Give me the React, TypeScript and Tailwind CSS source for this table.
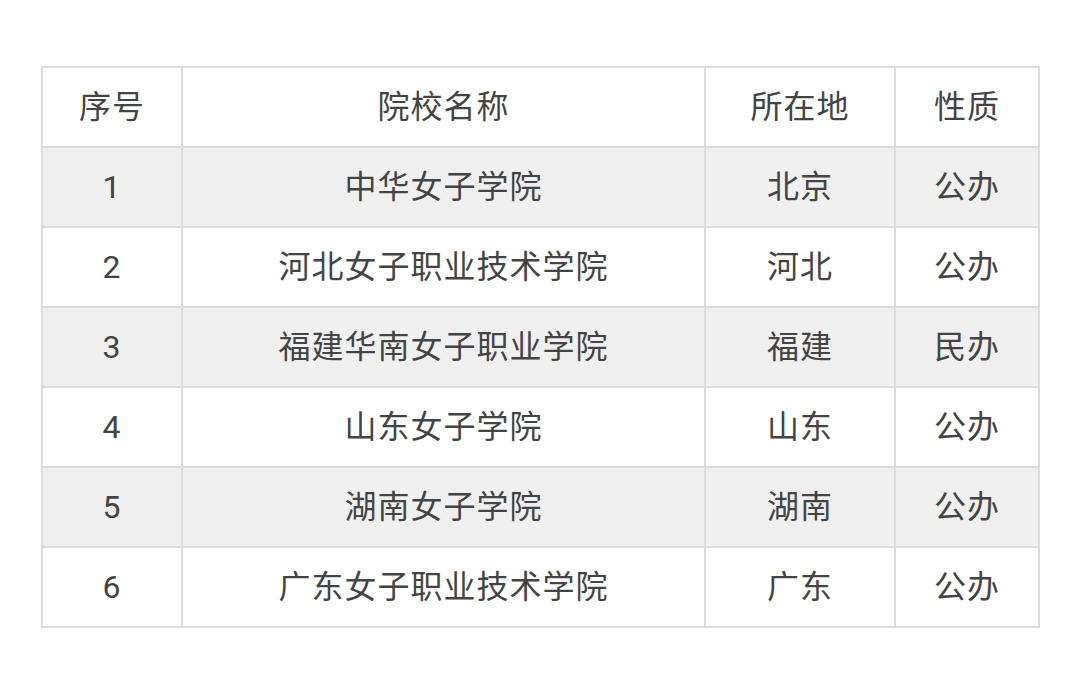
import React from 'react';

const rows = [
  ['1', '中华女子学院', '北京', '公办'],
  ['2', '河北女子职业技术学院', '河北', '公办'],
  ['3', '福建华南女子职业学院', '福建', '民办'],
  ['4', '山东女子学院', '山东', '公办'],
  ['5', '湖南女子学院', '湖南', '公办'],
  ['6', '广东女子职业技术学院', '广东', '公办'],
];

const cell = 'border-2 border-[#dcdcdc] h-[80px] p-0 text-center align-middle font-normal';

export default function App() {
  return (
    <div
      className="w-[1080px] h-[689px] bg-white pt-[66px] pl-[41px] text-[32px] tracking-[1px] text-[#444]"
      style={{ fontFamily: 'Roboto, "Noto Sans CJK SC", sans-serif' }}
    >
      <table className="border-collapse w-[997px] table-fixed">
        <colgroup>
          <col className="w-[140px]" />
          <col className="w-[523px]" />
          <col className="w-[190px]" />
          <col className="w-[144px]" />
        </colgroup>
        <thead>
          <tr className="bg-white">
            <th className={cell}>序号</th>
            <th className={cell}>院校名称</th>
            <th className={cell}>所在地</th>
            <th className={cell}>性质</th>
          </tr>
        </thead>
        <tbody>
          {rows.map((r, i) => (
            <tr key={r[0]} className={i % 2 === 0 ? 'bg-[#f0f0f0]' : 'bg-white'}>
              {r.map((c, j) => (
                <td key={j} className={cell}>{c}</td>
              ))}
            </tr>
          ))}
        </tbody>
      </table>
    </div>
  );
}
